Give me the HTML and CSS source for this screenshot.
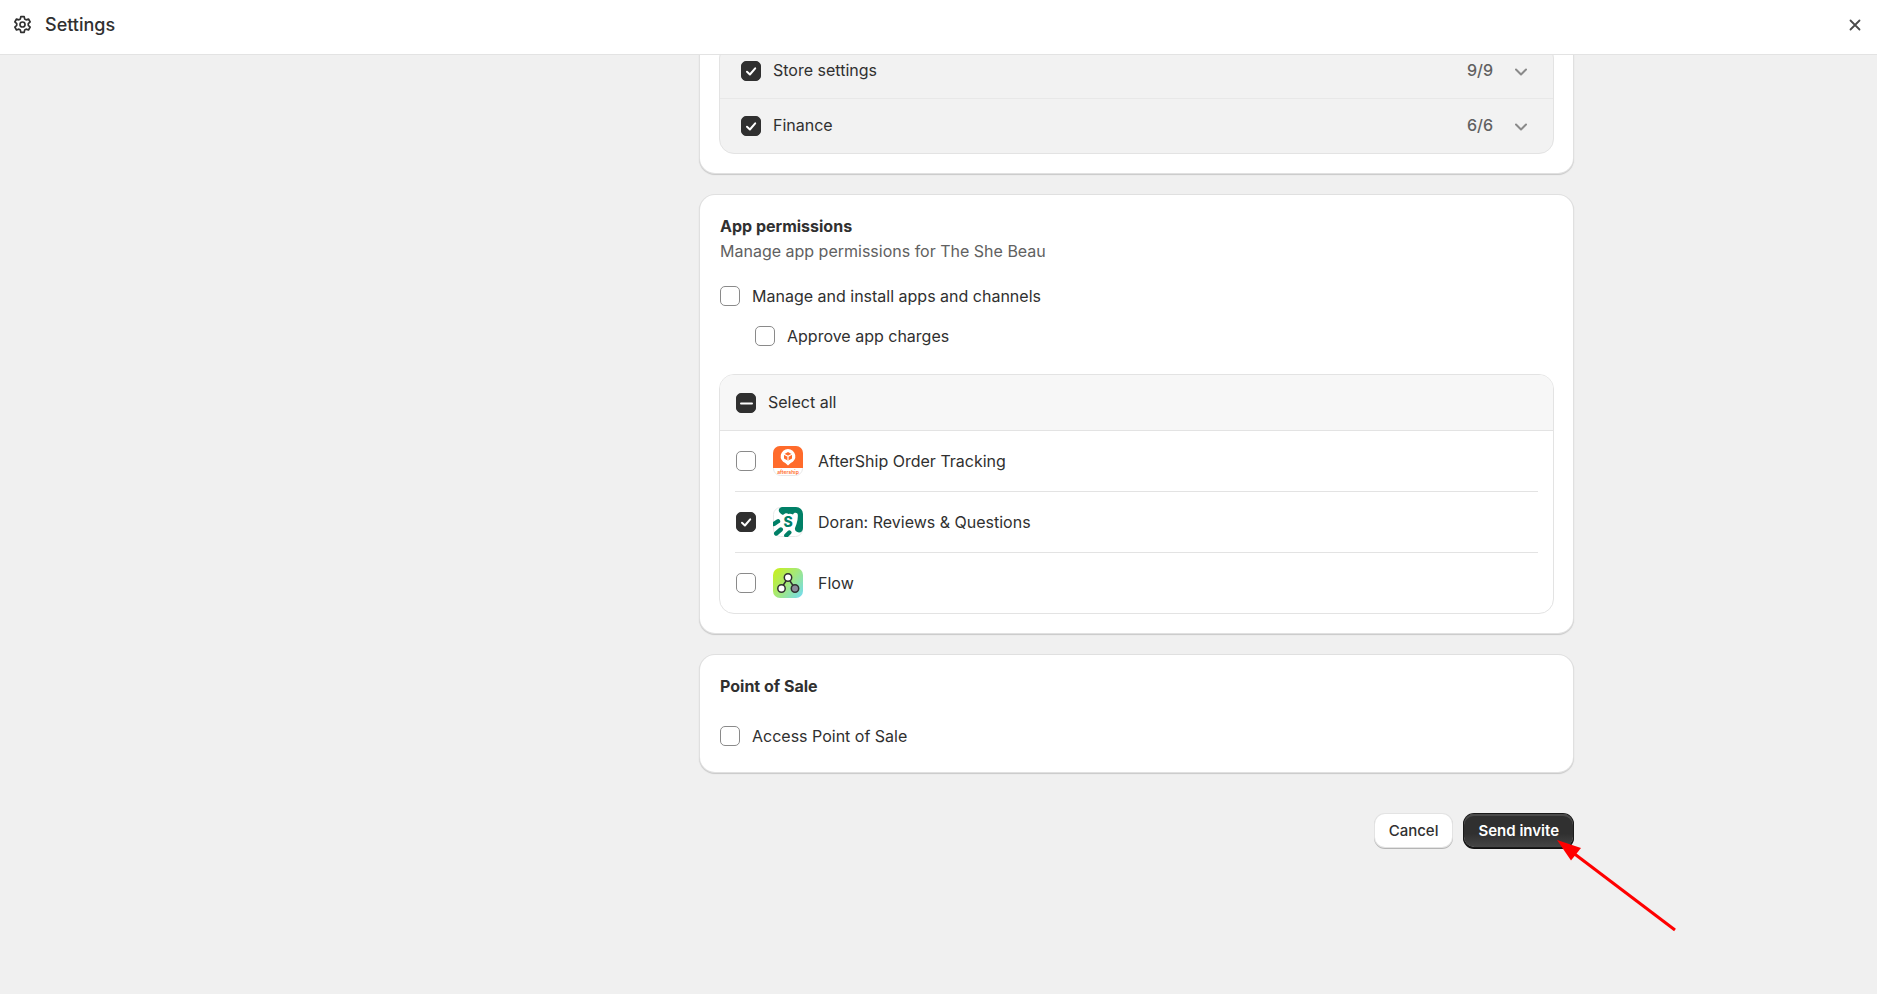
FILE: index.html
```html
<!DOCTYPE html>
<html lang="en">
<head>
<meta charset="utf-8">
<meta name="viewport" content="width=device-width, initial-scale=1">
<title>Settings</title>
<link rel="stylesheet" href="styles.css">
</head>
<body>
<header class="topbar">
  <svg class="gear" viewBox="0 0 20 20" fill="none" stroke="currentColor" stroke-width="1.6" stroke-linejoin="round" aria-hidden="true">
    <path d="M8.4 1.8h3.2l.5 2.4 1.3.75 2.3-.8 1.6 2.8-1.8 1.65v1.5l1.8 1.65-1.6 2.8-2.3-.8-1.3.75-.5 2.4H8.4l-.5-2.4-1.3-.75-2.3.8-1.6-2.8L4.5 10.1V8.6L2.7 6.95l1.6-2.8 2.3.8 1.3-.75z" transform="translate(0 .65)"/>
    <circle cx="10" cy="10" r="2.4"/>
  </svg>
  <h1 class="topbar-title">Settings</h1>
  <button class="close" type="button" aria-label="Close">
    <svg viewBox="0 0 12 12" fill="none" stroke="currentColor" stroke-width="1.8" stroke-linecap="round" aria-hidden="true"><path d="M1.5 1.5l9 9M10.500 1.500l-9 9"/></svg>
  </button>
</header>

<main class="page">
  <div class="content">
    <section class="card card-scrolled">
      <div class="panel panel-muted">
        <div class="group-row">
          <label class="choice"><span class="box"><input type="checkbox" checked><svg viewBox="0 0 20 20" aria-hidden="true"><path d="M6 10.800l2.900 2.700 5.300-6.200"/></svg></span>Store settings</label>
          <span class="count">9/9</span>
          <button class="expand" type="button" aria-label="Expand Store settings"><svg viewBox="0 0 24 24" aria-hidden="true"><path d="M7 10.500l5 5 5-5"/></svg></button>
        </div>
        <div class="group-row">
          <label class="choice"><span class="box"><input type="checkbox" checked><svg viewBox="0 0 20 20" aria-hidden="true"><path d="M6 10.800l2.900 2.700 5.300-6.200"/></svg></span>Finance</label>
          <span class="count">6/6</span>
          <button class="expand" type="button" aria-label="Expand Finance"><svg viewBox="0 0 24 24" aria-hidden="true"><path d="M7 10.500l5 5 5-5"/></svg></button>
        </div>
      </div>
    </section>

    <section class="card">
      <h2 class="card-title">App permissions</h2>
      <p class="card-text">Manage app permissions for The She Beau</p>
      <div class="choices">
        <label class="choice"><span class="box"><input type="checkbox"></span>Manage and install apps and channels</label>
        <label class="choice choice-nested"><span class="box"><input type="checkbox"></span>Approve app charges</label>
      </div>
      <div class="panel">
        <div class="select-all">
          <label class="choice"><span class="box"><input class="mixed" type="checkbox" aria-checked="mixed"><svg viewBox="0 0 20 20" aria-hidden="true"><path d="M5 10.500h11"/></svg></span>Select all</label>
        </div>
        <ul class="apps">
          <li class="app">
            <label class="choice"><span class="box"><input type="checkbox"></span>
              <svg class="app-icon" viewBox="0 0 30 30" aria-hidden="true">
                <rect x=".5" y=".5" width="29" height="29" rx="7" fill="#fff" stroke="#e8e8e8"/>
                <path d="M0 22V7a7 7 0 0 1 7-7h16a7 7 0 0 1 7 7v15z" fill="#ff6b2b"/>
                <path d="M15 3a7.300 7.300 0 0 1 2.700 14.100L15 19.500l-2.700-2.400A7.300 7.300 0 0 1 15 3z" fill="#fff"/>
                <path d="M15 6l4 2.200v4.300L15 14.700l-4-2.200V8.200z" fill="#ff6b2b"/>
                <path d="M11 8.300l4 2 4-2M15 10.300v4.400" fill="none" stroke="#fff" stroke-width="1.200"/>
                <text class="aftership-name" x="15" y="27.500" text-anchor="middle">aftership</text>
              </svg>AfterShip Order Tracking</label>
          </li>
          <li class="app">
            <label class="choice"><span class="box"><input type="checkbox" checked><svg viewBox="0 0 20 20" aria-hidden="true"><path d="M6 10.800l2.900 2.700 5.300-6.200"/></svg></span>
              <svg class="app-icon" viewBox="0 0 30 30" aria-hidden="true">
                <rect x=".5" y=".5" width="29" height="29" rx="7" fill="#fff" stroke="#e8e8e8"/>
                <path d="M9 0h14a7 7 0 0 1 7 7v14c0 2.500-1.500 4.500-4 4.500-2.800 0-4.500-2-4-4.500l1.500-4c1-3 1.500-6 1.300-9 0-2.500-3.800-3-4.800-.5-1.500-.8-3-1-4.500-.5-1.500-1-3.500-1-5.500 1C5 6 4 1.500 9 0z" fill="#008067"/>
                <path d="M1 17l4-2.700M3.200 26.500l4.600-4M13.300 28.500l3-3" fill="none" stroke="#008067" stroke-width="4.400" stroke-linecap="round"/>
                <text class="doran-letter" x="15" y="20" text-anchor="middle">S</text>
              </svg>Doran: Reviews &amp; Questions</label>
          </li>
          <li class="app">
            <label class="choice"><span class="box"><input type="checkbox"></span>
              <svg class="app-icon" viewBox="0 0 30 30" aria-hidden="true">
                <defs><linearGradient id="flow" x1="0" y1=".1" x2="1" y2=".9"><stop offset="0" stop-color="#c8f01e"/><stop offset=".5" stop-color="#a3e87c"/><stop offset="1" stop-color="#74dcec"/></linearGradient></defs>
                <rect width="30" height="30" rx="7" fill="url(#flow)"/>
                <g stroke="#303030" stroke-width="1.500"><path d="M13 13l-3 4.500M17 13l3 4.500"/><circle cx="15" cy="9.500" r="3.700" fill="#fff"/><circle cx="8.500" cy="20.500" r="3.700" fill="#fff"/><circle cx="22" cy="20.500" r="3.700" fill="#8b8b9b"/></g>
              </svg>Flow</label>
          </li>
        </ul>
      </div>
    </section>

    <section class="card">
      <h2 class="card-title">Point of Sale</h2>
      <div class="choices choices-spaced">
        <label class="choice"><span class="box"><input type="checkbox"></span>Access Point of Sale</label>
      </div>
    </section>

    <div class="actions">
      <button class="button" type="button">Cancel</button>
      <button class="button button-primary" type="button">Send invite</button>
      <svg class="pointer" viewBox="0 0 120 92" aria-hidden="true">
        <path d="M15 12l103 78" stroke="#f00" stroke-width="3"/>
        <path d="M0 0l24 8-10 12.500z" fill="#f00"/>
      </svg>
    </div>
  </div>
</main>
</body>
</html>
```
FILE: styles.css
```css
* {
  box-sizing: border-box;
}

body {
  min-height: 100vh;
  margin: 0;
  background: #f0f0f0;
  color: #303030;
  font-family: Inter, "Liberation Sans", sans-serif;
  font-size: 16px;
  line-height: 25px;
}

h1,
h2,
p,
ul {
  margin: 0;
  padding: 0;
}

button {
  font: inherit;
  color: inherit;
}

.topbar {
  position: relative;
  z-index: 1;
  display: flex;
  align-items: center;
  gap: 12px;
  padding: 12px 12px 17px;
  background: #fff;
  border-bottom: 1px solid #e3e3e3;
}

.gear {
  width: 21px;
  height: 21px;
}

.topbar-title {
  flex: 1;
  font-size: 18px;
  font-weight: 500;
}

.close {
  display: flex;
  padding: 4px;
  border: 0;
  background: none;
  color: #4a4a4a;
}

.close svg {
  width: 12px;
  height: 12px;
}

.page {
  max-width: 1269px;
  margin: 0 auto;
  padding-left: 396px;
}

.content {
  display: flex;
  flex-direction: column;
  gap: 22px;
}

.card {
  padding: 19px 20px;
  background: #fff;
  border-radius: 15px;
  box-shadow: 0 0 0 1px #e0e0e0, 0 1px 1px 1px #c8c8c8;
}

.card-scrolled {
  margin-top: -31px;
}

.card-title {
  font-size: 16px;
  font-weight: 650;
}

.card-text {
  color: #616161;
}

.panel {
  margin: 0 -1px;
  border: 1px solid #e3e3e3;
  border-radius: 15px;
  overflow: hidden;
}

.panel-muted {
  background: #f2f2f2;
}

.group-row {
  display: flex;
  align-items: center;
  padding: 14px 20px 15px 21px;
}

.group-row + .group-row {
  border-top: 1px solid #e8e8e8;
}

.group-row .choice {
  flex: 1;
}

.count {
  color: #616161;
  font-weight: 500;
}

.expand {
  display: flex;
  margin-left: 16px;
  padding: 0;
  border: 0;
  background: none;
}

.expand svg {
  width: 24px;
  height: 24px;
  fill: none;
  stroke: #8a8a8a;
  stroke-width: 2;
  stroke-linecap: round;
  stroke-linejoin: round;
}

.choice {
  display: flex;
  align-items: center;
}

.box {
  position: relative;
  display: flex;
  margin-right: 12px;
}

.box input {
  appearance: none;
  width: 20px;
  height: 20px;
  margin: 0;
  border: 1px solid #8a8a8a;
  border-radius: 5px;
  background: #fff;
}

.box input:checked,
.box .mixed {
  border-color: #303030;
  background: #303030;
}

.box svg {
  position: absolute;
  inset: 0;
  fill: none;
  stroke: #fff;
  stroke-width: 2;
  stroke-linecap: round;
  stroke-linejoin: round;
  pointer-events: none;
}

.choices {
  display: grid;
  gap: 8px;
  margin: 16px 0 22px;
}

.choices .choice {
  min-height: 32px;
}

.choices-spaced {
  margin: 21px 0 1px;
}

.choice-nested {
  padding-left: 35px;
}

.select-all {
  padding: 15px 16px;
  background: #f7f7f7;
  border-bottom: 1px solid #e3e3e3;
}

.apps {
  padding: 0 15px;
  list-style: none;
}

.app {
  padding: 15px 1px;
}

.app + .app {
  border-top: 1px solid #e3e3e3;
}

.app-icon {
  width: 30px;
  height: 30px;
  margin: 0 15px 0 5px;
}

.aftership-name {
  fill: #ff6b2b;
  font-size: 5px;
  font-weight: 600;
}

.doran-letter {
  fill: #008067;
  font-size: 14px;
  font-weight: 800;
}

.actions {
  position: relative;
  display: flex;
  justify-content: flex-end;
  gap: 12px;
  padding: 20px 0 48px;
}

.button {
  padding: 5px 14px;
  border: 0;
  border-radius: 10px;
  background: #fff;
  box-shadow: 0 0 0 1px #e3e3e3, 0 1px 0 1px #b5b5b5;
  font-size: 15px;
  font-weight: 500;
  line-height: 23px;
}

.button-primary {
  background: linear-gradient(#303030 60%, #454545);
  color: #fff;
  font-weight: 600;
  box-shadow: 0 0 0 1px #1a1a1a, 0 1px 0 1px #111, inset 0 2px 0 #4a4a4a;
}

.pointer {
  position: absolute;
  top: 46px;
  right: -104px;
  width: 120px;
  height: 92px;
  pointer-events: none;
}
```
